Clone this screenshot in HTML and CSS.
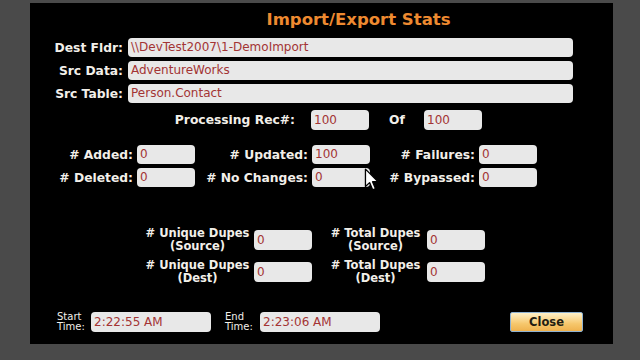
FILE: index.html
```html
<!DOCTYPE html>
<html lang="en">
<head>
    <meta charset="UTF-8">
    <meta name="viewport" content="width=device-width, initial-scale=1.0">
    <title>Import/Export Stats</title>
    <link rel="stylesheet" href="styles.css">
</head>
<body>
    <div class="panel">
        <h1 class="title">Import/Export Stats</h1>

        <div class="paths">
            <label>Dest Fldr:</label>
            <div class="field">\\DevTest2007\1-DemoImport</div>
            <label>Src Data:</label>
            <div class="field">AdventureWorks</div>
            <label>Src Table:</label>
            <div class="field">Person.Contact</div>
        </div>

        <div class="progress">
            <label class="rec-label">Processing Rec#:</label>
            <div class="field small">100</div>
            <label class="of-label">Of</label>
            <div class="field small">100</div>
        </div>

        <div class="counts">
            <label>#&nbsp;Added:</label>
            <div class="field small">0</div>
            <label>#&nbsp;Updated:</label>
            <div class="field small">100</div>
            <label>#&nbsp;Failures:</label>
            <div class="field small">0</div>
            <label>#&nbsp;Deleted:</label>
            <div class="field small">0</div>
            <label>#&nbsp;No&nbsp;Changes:</label>
            <div class="field small">0</div>
            <label>#&nbsp;Bypassed:</label>
            <div class="field small">0</div>
        </div>

        <div class="dupes">
            <label># Unique Dupes<br>(Source)</label>
            <div class="field small">0</div>
            <label># Total Dupes<br>(Source)</label>
            <div class="field small">0</div>
            <label># Unique Dupes<br>(Dest)</label>
            <div class="field small">0</div>
            <label># Total Dupes<br>(Dest)</label>
            <div class="field small">0</div>
        </div>

        <div class="footer">
            <label class="time-label">Start<br>Time:</label>
            <div class="field time">2:22:55 AM</div>
            <label class="time-label end">End<br>Time:</label>
            <div class="field time">2:23:06 AM</div>
            <button class="close-btn">Close</button>
        </div>

        <svg class="cursor" width="16" height="24" viewBox="0 0 14 22">
            <path d="M1 1 L1 17 L4.8 13.4 L7.6 20 L10.2 18.9 L7.5 12.6 L12.6 12.6 Z" fill="#fff" stroke="#000" stroke-width="1.2" stroke-linejoin="round"/>
        </svg>
    </div>
</body>
</html>
```

FILE: styles.css
```css
body {
    margin: 0;
    width: 640px;
    height: 360px;
    overflow: hidden;
    background-color: #4a4a4a;
    font-family: "DejaVu Sans", Verdana, sans-serif;
}
.panel {
    position: relative;
    box-sizing: border-box;
    width: 583px;
    height: 341px;
    margin: 3px 0 0 30px;
    padding-top: 7px;
    background: #000;
    color: #f2efe9;
}
.title {
    margin: 0 0 8px 0;
    height: 20px;
    line-height: 20px;
    text-align: center;
    font-size: 16.5px;
    font-weight: bold;
    color: #ee8a30;
    padding-left: 74px;
}
label {
    font-size: 12.3px;
    font-weight: bold;
    white-space: nowrap;
}
.field {
    box-sizing: border-box;
    height: 19px;
    line-height: 19px;
    padding-left: 3px;
    background: #e8e8e8;
    border-radius: 4px;
    color: #a33434;
    font-size: 12px;
    white-space: nowrap;
    overflow: hidden;
}
.small {
    width: 58px;
}

/* path rows */
.paths {
    display: grid;
    grid-template-columns: 93px 445px;
    grid-auto-rows: 19px;
    column-gap: 5px;
    row-gap: 4px;
    align-items: center;
}
.paths label {
    text-align: right;
}

/* processing rec# */
.progress {
    display: flex;
    align-items: center;
    margin-top: 7px;
    height: 20px;
}
.progress .field {
    height: 20px;
    line-height: 20px;
}
.rec-label {
    width: 265px;
    text-align: right;
    margin-right: 16px;
}
.of-label {
    width: 55px;
    padding-left: 20px;
    box-sizing: border-box;
}

/* added / updated / failures */
.counts {
    display: grid;
    grid-template-columns: 107px 58px 117px 58px 109px 58px;
    grid-auto-rows: 19px;
    row-gap: 4px;
    align-items: center;
    margin-top: 15px;
}
.counts label {
    text-align: right;
    padding-right: 4px;
}

/* dupes */
.dupes {
    display: grid;
    grid-template-columns: 109px 59px 114px 59px;
    grid-auto-rows: 30px;
    row-gap: 2px;
    align-items: center;
    margin: 38px 0 0 115px;
}
.dupes label {
    font-size: 11.5px;
    line-height: 13px;
    text-align: center;
    padding-right: 4px;
}
.dupes label:nth-of-type(even) {
    padding: 0 2px 0 13px;
}
.dupes .field {
    height: 20px;
    line-height: 20px;
}

/* footer */
.footer {
    display: flex;
    align-items: center;
    margin-top: 25px;
    padding: 0 30px 0 27px;
    height: 20px;
}
.time-label {
    width: 34px;
    font-size: 10px;
    font-weight: normal;
    line-height: 10px;
    text-align: left;
}
.time-label.end {
    width: 35px;
    margin-left: 14px;
}
.time {
    width: 120px;
    height: 20px;
    line-height: 20px;
}
.close-btn {
    margin-left: auto;
    width: 73px;
    height: 20px;
    padding: 0;
    border: 1px solid #8fb2d2;
    border-radius: 2px;
    background: linear-gradient(#fff1c8, #f6c76c 60%, #efb24e);
    color: #231d12;
    font-family: "DejaVu Sans", Verdana, sans-serif;
    font-size: 11.5px;
    font-weight: 600;
}

.cursor {
    position: absolute;
    left: 334px;
    top: 165px;
}
```
